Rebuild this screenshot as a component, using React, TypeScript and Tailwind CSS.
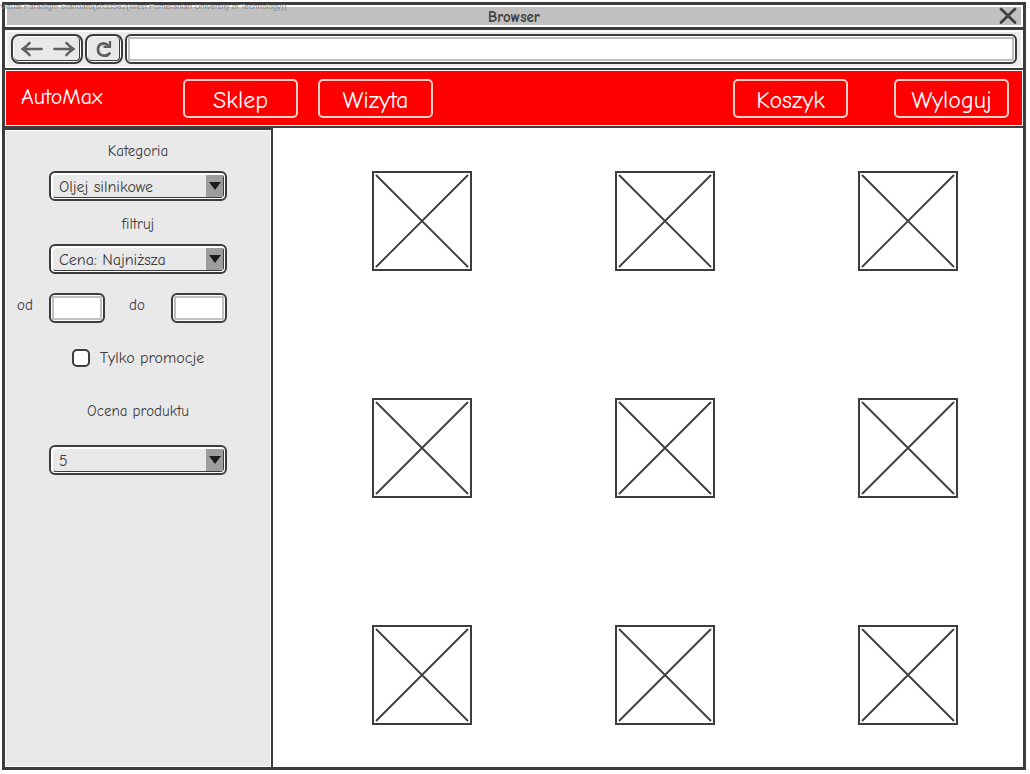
import type { ReactNode } from "react";

const sketch = "font-['Comic_Sans_MS','Comic_Neue','Open_Sans',sans-serif] [font-variant-ligatures:none]";

function NavButton({ children }: { children: ReactNode }) {
  return (
    <button
      type="button"
      className="h-[39px] w-[115px] rounded-[5px] border-2 border-[#ffd0ca] pt-0.5 text-2xl leading-8 text-white"
    >
      {children}
    </button>
  );
}

function SelectField({ id, label, options }: { id: string; label: string; options: string[] }) {
  return (
    <>
      <label htmlFor={id} className="text-center text-[15px] leading-5">
        {label}
      </label>
      <div className="relative h-[30px] rounded-md border-2 border-[#3c3c3c] bg-white p-px">
        <select
          id={id}
          className="block h-6 w-full appearance-none rounded-sm border border-t-white border-r-[#3c3c3c] border-b-[#3c3c3c] border-l-white bg-[#e9e9e9] pt-0.5 pl-1.5 text-base leading-5 outline-none"
        >
          {options.map((option) => (
            <option key={option}>{option}</option>
          ))}
        </select>
        <span className="pointer-events-none absolute top-0.5 right-0.5 flex h-[22px] w-[17px] items-center justify-center bg-[#9d9d9d]">
          <svg viewBox="0 0 12 8" className="h-2 w-3" aria-hidden="true">
            <path d="M0 0H12L6 8Z" fill="#1c1c1c" />
          </svg>
        </span>
      </div>
    </>
  );
}

function PriceInput({ id }: { id: string }) {
  return (
    <div className="h-[30px] w-14 rounded-md border-2 border-[#3c3c3c] bg-white p-px">
      <input id={id} type="text" className="block h-6 w-full border-2 border-[#c0c0c0] bg-white px-1 text-sm outline-none" />
    </div>
  );
}

function ProductImage() {
  return (
    <svg viewBox="0 0 100 100" className="size-[100px]" role="img" aria-label="Produkt">
      <rect x="1" y="1" width="98" height="98" fill="#fff" stroke="#3c3c3c" strokeWidth="2" />
      <path d="M4.500 4.500L95.500 95.500M95.500 4.500L4.500 95.500" stroke="#404040" strokeWidth="1.900" strokeLinecap="round" />
    </svg>
  );
}

export default function App() {
  return (
    <div className={`relative flex min-h-screen flex-col overflow-hidden bg-white pt-0.5 pr-1 pb-1 pl-0.5 text-[#3c3c3c] ${sketch}`}>
      <div className="flex grow flex-col border-3 border-[#3c3c3c]">
        <header className="flex h-[25px] items-stretch border-b-3 border-[#3c3c3c] p-0.5">
          <div className="grid grow grid-cols-[1fr_auto_1fr] items-center bg-[#c0c0c0]">
            <span />
            <h1 className="pt-0.5 text-[15px] leading-4 font-bold">Browser</h1>
            <button type="button" aria-label="Zamknij" className="mr-1 justify-self-end">
              <svg viewBox="0 0 18 18" className="size-[18px]" aria-hidden="true">
                <path d="M2 2L16 15.500M16 2L2 15.500" stroke="#404040" strokeWidth="2.800" strokeLinecap="round" />
              </svg>
            </button>
          </div>
        </header>

        <div className="border-b-2 border-[#3c3c3c] p-0.5">
          <div className="flex gap-0.5 bg-[#ececec] px-1 py-0.5">
            <div className="h-[30px] w-[72px] rounded-lg border-2 border-[#3c3c3c] bg-white p-px">
              <div className="flex h-6 items-center justify-between rounded-sm border-r border-b border-[#3c3c3c] bg-[#e9e9e9] pr-1 pl-[7px]">
                <button type="button" aria-label="Wstecz">
                  <svg viewBox="0 0 22 16" className="h-4 w-[22px]" fill="none" stroke="#606060" strokeWidth="2.600" strokeLinecap="round" aria-hidden="true">
                    <path d="M20.500 8H2M8.500 2Q5.500 5.500 1.500 8Q5.500 10.500 8.500 14" />
                  </svg>
                </button>
                <button type="button" aria-label="Dalej">
                  <svg viewBox="0 0 22 16" className="h-4 w-[22px]" fill="none" stroke="#606060" strokeWidth="2.600" strokeLinecap="round" aria-hidden="true">
                    <path d="M1.500 8H20M13.500 2Q16.500 5.500 20.500 8Q16.500 10.500 13.500 14" />
                  </svg>
                </button>
              </div>
            </div>
            <div className="h-[30px] w-[38px] rounded-lg border-2 border-[#3c3c3c] bg-white p-px">
              <button
                type="button"
                aria-label="Odśwież"
                className="flex h-6 w-full items-center justify-center rounded-sm border-r border-b border-[#3c3c3c] bg-[#e9e9e9]"
              >
                <svg viewBox="0 0 18 18" className="size-[18px]" fill="none" stroke="#606060" strokeWidth="2.800" aria-hidden="true">
                  <path d="M14.500 13.500C11.500 17 3.500 16.500 3 10C2.600 3.500 9.500 1.500 13.500 6" strokeLinecap="round" />
                  <path d="M15 1V7H8.500" strokeWidth="2.200" />
                </svg>
              </button>
            </div>
            <div className="h-[30px] grow rounded-md border-2 border-[#3c3c3c] bg-white p-px">
              <input type="text" aria-label="Adres" className="block h-6 w-full border-2 border-[#c0c0c0] bg-white px-1 text-sm outline-none" />
            </div>
          </div>
        </div>

        <nav className="border-b-2 border-[#3c3c3c] p-px">
          <div className="flex h-[54px] items-start bg-[#ff0000] pt-2 pr-[13px] pl-[15px]">
            <a href="#" className="mt-0.5 w-[162px] text-[22px] leading-8 text-white">
              AutoMax
            </a>
            <div className="flex grow gap-5">
              <NavButton>Sklep</NavButton>
              <NavButton>Wizyta</NavButton>
            </div>
            <div className="flex gap-[46px]">
              <NavButton>Koszyk</NavButton>
              <NavButton>Wyloguj</NavButton>
            </div>
          </div>
        </nav>

        <div className="flex grow">
          <aside className="w-[268px] shrink-0 border-t-2 border-r-2 border-[#3c3c3c] bg-white p-px">
            <form className="flex h-full flex-col bg-[#e9e9e9] px-[43px] pt-2.5">
              <div className="flex flex-col gap-2.5">
                <SelectField id="category" label="Kategoria" options={["Oljej silnikowe"]} />
              </div>
              <div className="mt-[13px] flex flex-col gap-2.5">
                <SelectField id="sort" label="filtruj" options={["Cena: Najniższa"]} />
              </div>
              <div className="mt-[19px] -ml-8 flex text-[15px] leading-6">
                <label htmlFor="price-from" className="w-8">
                  od
                </label>
                <PriceInput id="price-from" />
                <label htmlFor="price-to" className="grow pl-6">
                  do
                </label>
                <PriceInput id="price-to" />
              </div>
              <div className="mt-[25px] flex items-center justify-center gap-2.5">
                <input
                  id="promo"
                  type="checkbox"
                  className="size-[18px] appearance-none rounded-[5px] border-2 border-[#3c3c3c] bg-white checked:bg-[#9d9d9d]"
                />
                <label htmlFor="promo" className="text-base leading-5">
                  Tylko promocje
                </label>
              </div>
              <div className="mt-[33px] flex flex-col gap-6">
                <SelectField id="rating" label="Ocena produktu" options={["5"]} />
              </div>
            </form>
          </aside>

          <main className="grid grow grid-cols-[repeat(3,auto)] content-between justify-between gap-6 pt-[43px] pr-[65px] pb-[42px] pl-[99px]">
            {Array.from({ length: 9 }, (_, index) => (
              <ProductImage key={index} />
            ))}
          </main>
        </div>
      </div>

      <p className="pointer-events-none absolute top-0.5 left-0 font-['Liberation_Sans',sans-serif] text-[8px] leading-[10px] whitespace-nowrap text-[#888888]">
        Visual Paradigm Standard(sh55582(West Pomeranian University of Technology))
      </p>
    </div>
  );
}
